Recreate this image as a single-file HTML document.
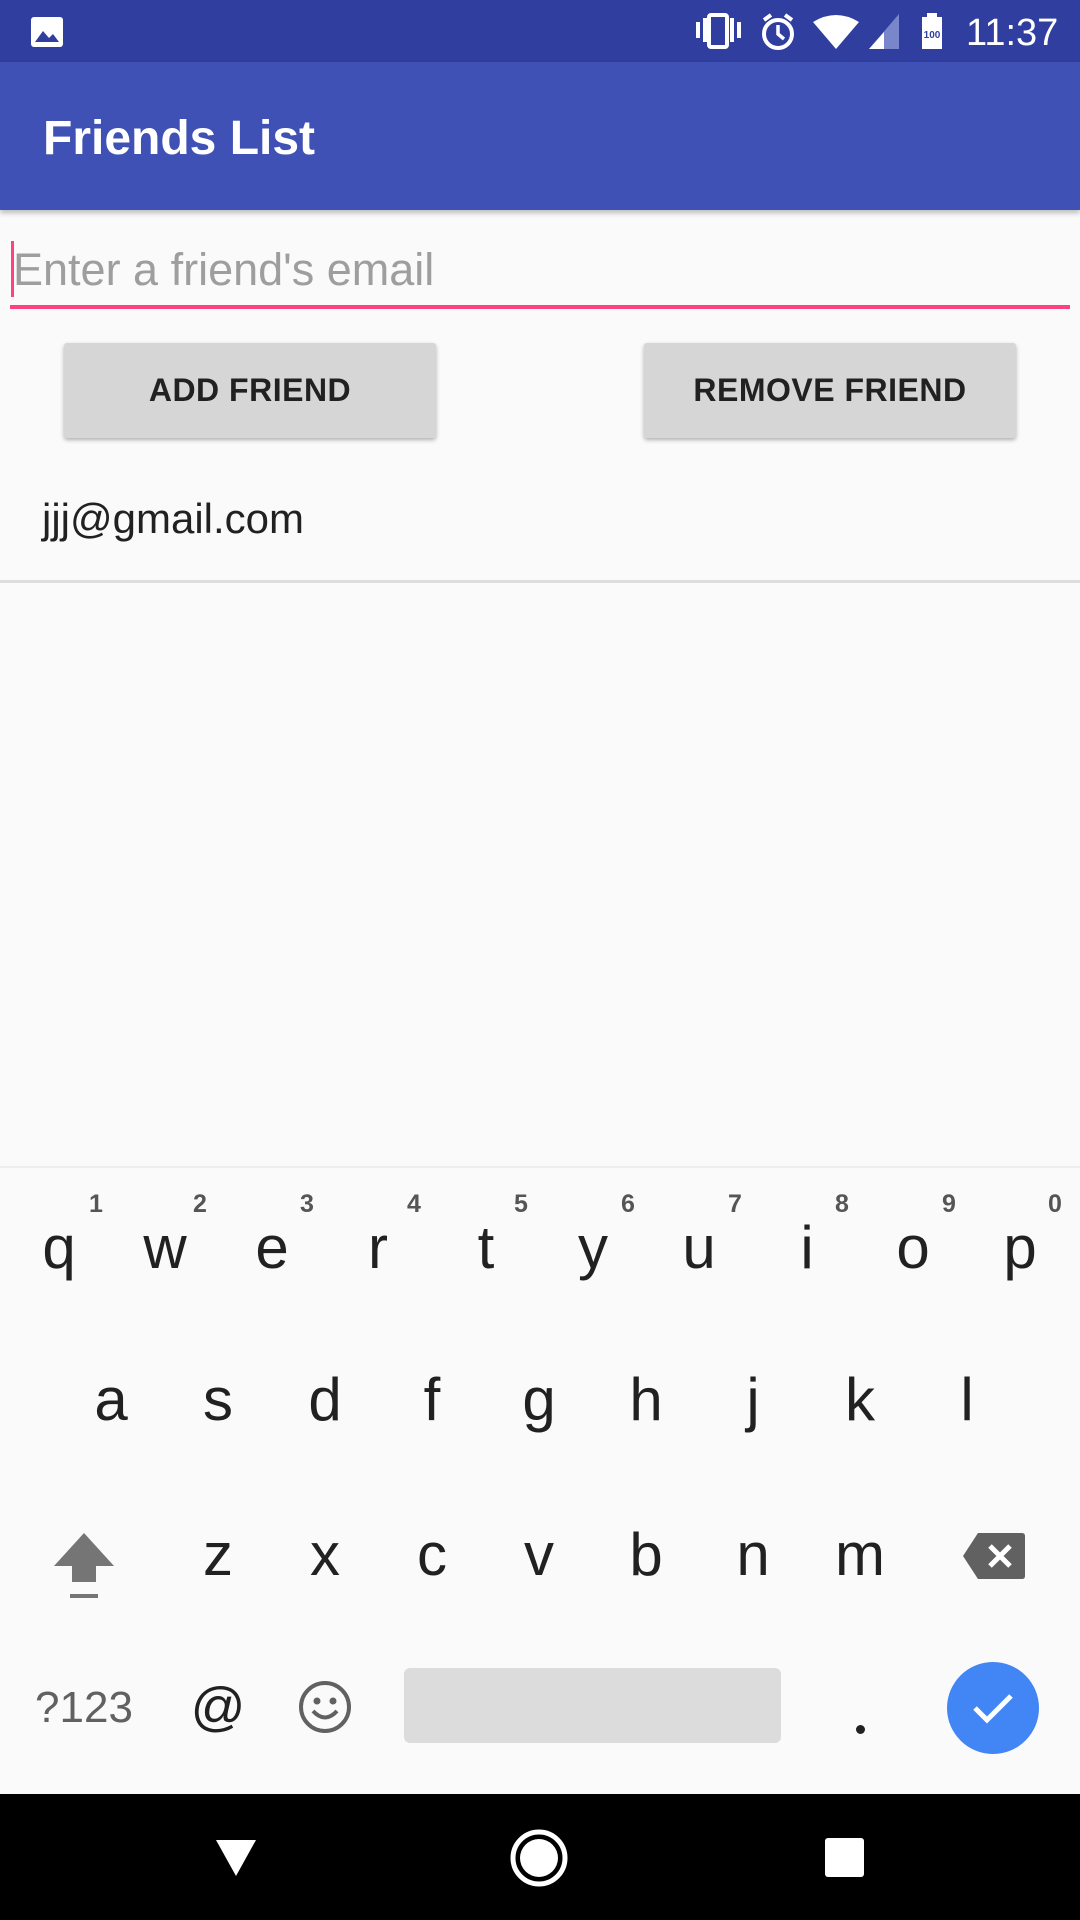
<!DOCTYPE html>
<html><head><meta charset="utf-8"><style>
*{margin:0;padding:0;box-sizing:border-box}
body{width:1080px;height:1920px;background:#fafafa;font-family:"Liberation Sans",Roboto,sans-serif;position:relative;overflow:hidden}
.a{position:absolute}
.k{position:absolute;width:100px;text-align:center;font-size:60px;color:#212121;line-height:1}
.n{position:absolute;font-size:25px;color:#555;font-weight:bold;line-height:1}
.btn{position:absolute;background:#d6d6d6;border-radius:3px;box-shadow:0 2px 4px rgba(0,0,0,.3);font-size:32px;font-weight:bold;color:#212121;display:flex;align-items:center;justify-content:center;letter-spacing:0.5px}
</style></head><body>
<div class="a" style="left:0;top:0;width:1080px;height:62px;background:#303f9f"></div>
<svg class="a" style="left:30px;top:16px" width="34" height="32" viewBox="0 0 34 32"><rect x="1" y="1" width="32" height="30" rx="3" fill="#fff"/><path d="M5 26 L13 15 L19 22 L23 18 L29 26Z" fill="#303f9f"/></svg>
<svg class="a" style="left:693px;top:12px" width="380" height="40" viewBox="0 0 380 40">
<rect x="3" y="10" width="4" height="16" fill="#fff"/><rect x="10" y="6" width="4" height="24" fill="#fff"/>
<rect x="16" y="3" width="18" height="32" rx="2" fill="none" stroke="#fff" stroke-width="4"/>
<rect x="37" y="6" width="4" height="24" fill="#fff"/><rect x="44" y="10" width="4" height="16" fill="#fff"/>
<circle cx="85" cy="22" r="14" fill="none" stroke="#fff" stroke-width="4"/><path d="M85 13 V22 L91 27" stroke="#fff" stroke-width="3.5" fill="none"/>
<path d="M71 8 L78 3 M99 8 L92 3" stroke="#fff" stroke-width="4"/>
<path d="M120 10 Q143 -4 166 10 L143 37Z" fill="#fff"/>
<path d="M176 37 L206 2 V37Z" fill="#7986cb"/><path d="M176 37 L191 20 V37Z" fill="#fff"/>
<rect x="229" y="5" width="20" height="32" fill="#fff"/><rect x="234" y="1" width="10" height="5" fill="#fff"/>
<text x="239" y="26" font-size="10" font-weight="bold" fill="#303f9f" text-anchor="middle" font-family="Liberation Sans">100</text>
<text x="273" y="33" font-size="38" fill="#fff" font-family="Liberation Sans">11:37</text>
</svg>
<div class="a" style="left:0;top:62px;width:1080px;height:148px;background:#3f51b5;box-shadow:0 3px 5px rgba(0,0,0,.25)"></div>
<div class="a" style="left:43px;top:111px;font-size:48px;font-weight:bold;color:#fff">Friends List</div>
<div class="a" style="left:11px;top:241px;width:3px;height:56px;background:#ff4081"></div>
<div class="a" style="left:13px;top:244px;font-size:45px;color:#9e9e9e">Enter a friend's email</div>
<div class="a" style="left:10px;top:305px;width:1060px;height:4px;background:#ff4081"></div>
<div class="btn" style="left:64px;top:343px;width:372px;height:95px">ADD FRIEND</div>
<div class="btn" style="left:644px;top:343px;width:372px;height:95px">REMOVE FRIEND</div>
<div class="a" style="left:42px;top:495px;font-size:42px;color:#212121">jjj@gmail.com</div>
<div class="a" style="left:0;top:580px;width:1080px;height:3px;background:#ddd"></div>
<div class="a" style="left:0;top:1166px;width:1080px;height:2px;background:#eee"></div>
<div class="k" style="left:9px;top:1218px">q</div><div class="n" style="left:89px;top:1192px">1</div>
<div class="k" style="left:115px;top:1218px">w</div><div class="n" style="left:193px;top:1192px">2</div>
<div class="k" style="left:222px;top:1218px">e</div><div class="n" style="left:300px;top:1192px">3</div>
<div class="k" style="left:328px;top:1218px">r</div><div class="n" style="left:407px;top:1192px">4</div>
<div class="k" style="left:436px;top:1218px">t</div><div class="n" style="left:514px;top:1192px">5</div>
<div class="k" style="left:543px;top:1218px">y</div><div class="n" style="left:621px;top:1192px">6</div>
<div class="k" style="left:649px;top:1218px">u</div><div class="n" style="left:728px;top:1192px">7</div>
<div class="k" style="left:757px;top:1218px">i</div><div class="n" style="left:835px;top:1192px">8</div>
<div class="k" style="left:863px;top:1218px">o</div><div class="n" style="left:942px;top:1192px">9</div>
<div class="k" style="left:970px;top:1218px">p</div><div class="n" style="left:1048px;top:1192px">0</div>
<div class="k" style="left:61px;top:1370px">a</div><div class="k" style="left:168px;top:1370px">s</div><div class="k" style="left:275px;top:1370px">d</div><div class="k" style="left:382px;top:1370px">f</div><div class="k" style="left:489px;top:1370px">g</div><div class="k" style="left:596px;top:1370px">h</div><div class="k" style="left:703px;top:1370px">j</div><div class="k" style="left:810px;top:1370px">k</div><div class="k" style="left:917px;top:1370px">l</div>
<svg class="a" style="left:52px;top:1530px" width="64" height="72" viewBox="0 0 64 72"><path d="M32 3 L62 36 H44 V52 H20 V36 H2Z" fill="#757575"/><rect x="18" y="64" width="28" height="4" fill="#757575"/></svg>
<div class="k" style="left:168px;top:1525px">z</div><div class="k" style="left:275px;top:1525px">x</div><div class="k" style="left:382px;top:1525px">c</div><div class="k" style="left:489px;top:1525px">v</div><div class="k" style="left:596px;top:1525px">b</div><div class="k" style="left:703px;top:1525px">n</div><div class="k" style="left:810px;top:1525px">m</div>
<svg class="a" style="left:962px;top:1532px" width="64" height="48" viewBox="0 0 64 48"><path d="M16 1 H60 Q63 1 63 4 V44 Q63 47 60 47 H16 L1 24Z" fill="#616161"/><path d="M28 14 L48 34 M48 14 L28 34" stroke="#fff" stroke-width="5"/></svg>
<div class="a" style="left:34px;top:1683px;font-size:44px;color:#616161;width:100px;text-align:center">?123</div>
<div class="k" style="left:168px;top:1680px;font-size:54px">@</div>
<svg class="a" style="left:298px;top:1680px" width="54" height="54" viewBox="0 0 54 54"><circle cx="27" cy="27" r="24" fill="none" stroke="#616161" stroke-width="4"/><circle cx="19" cy="21" r="3.5" fill="#616161"/><circle cx="35" cy="21" r="3.5" fill="#616161"/><path d="M15 31 Q27 44 39 31" stroke="#616161" stroke-width="4" fill="none"/></svg>
<div class="a" style="left:404px;top:1668px;width:377px;height:75px;background:#dcdcdc;border-radius:6px"></div>
<div class="a" style="left:856px;top:1725px;width:9px;height:9px;border-radius:50%;background:#212121"></div>
<div class="a" style="left:947px;top:1662px;width:92px;height:92px;border-radius:50%;background:#4285f4"></div>
<svg class="a" style="left:970px;top:1688px" width="46" height="40" viewBox="0 0 46 40"><path d="M5 20 L17 32 L41 8" stroke="#fff" stroke-width="5" fill="none"/></svg>
<div class="a" style="left:0;top:1794px;width:1080px;height:126px;background:#000"></div>
<svg class="a" style="left:214px;top:1838px" width="44" height="40" viewBox="0 0 44 40"><path d="M2 2 H42 L22 38Z" fill="#fff"/></svg>
<svg class="a" style="left:509px;top:1828px" width="60" height="60" viewBox="0 0 60 60"><circle cx="30" cy="30" r="26" fill="none" stroke="#fff" stroke-width="5"/><circle cx="30" cy="30" r="19" fill="#fff"/></svg>
<div class="a" style="left:825px;top:1838px;width:39px;height:39px;background:#fff;border-radius:3px"></div>
</body></html>
